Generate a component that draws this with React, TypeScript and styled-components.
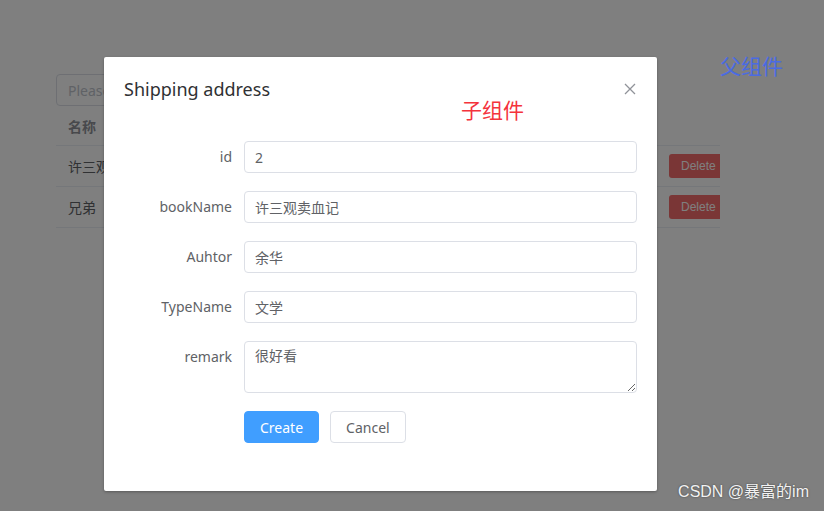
import { createGlobalStyle } from 'styled-components'
import styled from 'styled-components'

const GlobalStyle = createGlobalStyle`
  html, body {
    margin: 0;
    padding: 0;
  }
  body {
    font-family: "Noto Sans", "Noto Sans CJK SC", sans-serif;
    color: #606266;
  }
  * {
    box-sizing: border-box;
  }
`

const Page = styled.div`
  position: relative;
  width: 824px;
  height: 511px;
  overflow: hidden;
  background: #fff;
  padding: 53px 44px 0 56px;
  display: grid;
  grid-template-columns: 664px 1fr;
  align-items: start;
`

const ParentColumn = styled.div`
  display: flex;
  flex-direction: column;
  padding-top: 21px;
`

const ParentTitle = styled.div`
  position: relative;
  z-index: 3000;
  justify-self: end;
  white-space: nowrap;
  font-size: 21px;
  line-height: 26px;
  color: #4a6be3;
`

const SearchInput = styled.input`
  width: 220px;
  height: 32px;
  border: 1px solid #dcdfe6;
  border-radius: 4px;
  padding: 0 11px;
  font-family: inherit;
  font-size: 14px;
  color: #606266;
  outline: none;

  &::placeholder {
    color: #c0c4cc;
  }
`

const Table = styled.div`
  width: 664px;
  overflow: hidden;
  font-size: 14px;
`

const Row = styled.div<{ $head?: boolean }>`
  display: grid;
  grid-template-columns: 601px 1fr;
  align-items: center;
  height: ${(p) => (p.$head ? '40px' : '41px')};
  padding-left: 12px;
  border-bottom: 1px solid #ebeef5;
  color: ${(p) => (p.$head ? '#909399' : '#606266')};
  font-weight: ${(p) => (p.$head ? 700 : 400)};
`

const DangerButton = styled.button`
  width: 56px;
  height: 24px;
  border: none;
  border-radius: 3px;
  background: #f56c6c;
  color: #fff;
  font-family: "Liberation Sans", sans-serif;
  font-size: 12px;
  padding: 0 0 0 12px;
  text-align: left;
`

const Overlay = styled.div`
  position: absolute;
  inset: 0;
  z-index: 2000;
  background: rgba(0, 0, 0, 0.5);
`

const Dialog = styled.div`
  position: relative;
  width: 553px;
  margin: 57px 0 0 104px;
  background: #fff;
  border-radius: 2px;
  box-shadow: 0 1px 3px rgba(0, 0, 0, 0.3);
`

const DialogHeader = styled.div`
  display: flex;
  justify-content: space-between;
  align-items: center;
  padding: 20px 20px 10px;
`

const DialogTitle = styled.span`
  font-size: 18px;
  line-height: 24px;
  color: #303133;
`

const CloseButton = styled.button`
  display: flex;
  align-items: center;
  justify-content: center;
  width: 16px;
  height: 16px;
  padding: 0;
  margin-right: -1px;
  border: none;
  background: none;
  color: #909399;
`

const ChildTag = styled.div`
  position: absolute;
  left: 357px;
  top: 40px;
  font-size: 21px;
  line-height: 26px;
  color: #f4333c;
`

const DialogBody = styled.div`
  padding: 30px 20px;
`

const FormItem = styled.div`
  display: flex;
  align-items: flex-start;
  margin-bottom: 18px;
`

const Label = styled.label`
  width: 120px;
  flex-shrink: 0;
  padding-right: 12px;
  text-align: right;
  font-size: 14px;
  line-height: 32px;
  color: #606266;
`

const Field = styled.input`
  flex: 1;
  height: 32px;
  border: 1px solid #dcdfe6;
  border-radius: 4px;
  padding: 0 10px;
  font-family: inherit;
  font-size: 14px;
  color: #606266;
  outline: none;
`

const Area = styled.textarea`
  flex: 1;
  height: 52px;
  border: 1px solid #dcdfe6;
  border-radius: 4px;
  padding: 4px 10px;
  font-family: inherit;
  font-size: 14px;
  line-height: 20px;
  color: #606266;
  outline: none;
  resize: vertical;
`

const Actions = styled.div`
  display: flex;
  gap: 11px;
  margin-left: 120px;
`

const Button = styled.button<{ $primary?: boolean }>`
  height: 32px;
  padding: 0 15px;
  border-radius: 4px;
  border: 1px solid ${(p) => (p.$primary ? '#409eff' : '#dcdfe6')};
  background: ${(p) => (p.$primary ? '#409eff' : '#fff')};
  color: ${(p) => (p.$primary ? '#fff' : '#606266')};
  font-family: "Noto Sans", sans-serif;
  font-size: 14px;
`

const Watermark = styled.div`
  position: absolute;
  right: 15px;
  bottom: 9px;
  z-index: 3000;
  font-family: "Liberation Sans", "Noto Sans CJK SC", sans-serif;
  font-size: 16px;
  color: #f2f2f2;
  text-shadow: 0 0 2px rgba(0, 0, 0, 0.5);
`

const rows = ['许三观卖血记', '兄弟']

const fields = [
  { label: 'id', value: '2' },
  { label: 'bookName', value: '许三观卖血记' },
  { label: 'Auhtor', value: '余华' },
  { label: 'TypeName', value: '文学' },
]

export default function App() {
  return (
    <>
      <GlobalStyle />
      <Page>
        <ParentColumn>
          <SearchInput placeholder="Please input" readOnly />
          <Table>
            <Row $head>
              <span>名称</span>
              <span />
            </Row>
            {rows.map((name) => (
              <Row key={name}>
                <span>{name}</span>
                <DangerButton>Delete</DangerButton>
              </Row>
            ))}
          </Table>
        </ParentColumn>
        <ParentTitle>父组件</ParentTitle>

        <Overlay>
          <Dialog>
            <DialogHeader>
              <DialogTitle>Shipping address</DialogTitle>
              <CloseButton aria-label="close">
                <svg width="12" height="12" viewBox="0 0 12 12">
                  <path d="M1 1L11 11M11 1L1 11" stroke="currentColor" strokeWidth="1.3" />
                </svg>
              </CloseButton>
            </DialogHeader>
            <ChildTag>子组件</ChildTag>
            <DialogBody>
              {fields.map((f) => (
                <FormItem key={f.label}>
                  <Label>{f.label}</Label>
                  <Field defaultValue={f.value} />
                </FormItem>
              ))}
              <FormItem>
                <Label>remark</Label>
                <Area defaultValue="很好看" />
              </FormItem>
              <FormItem>
                <Actions>
                  <Button $primary>Create</Button>
                  <Button>Cancel</Button>
                </Actions>
              </FormItem>
            </DialogBody>
          </Dialog>
        </Overlay>
        <Watermark>CSDN @暴富的im</Watermark>
      </Page>
    </>
  )
}
